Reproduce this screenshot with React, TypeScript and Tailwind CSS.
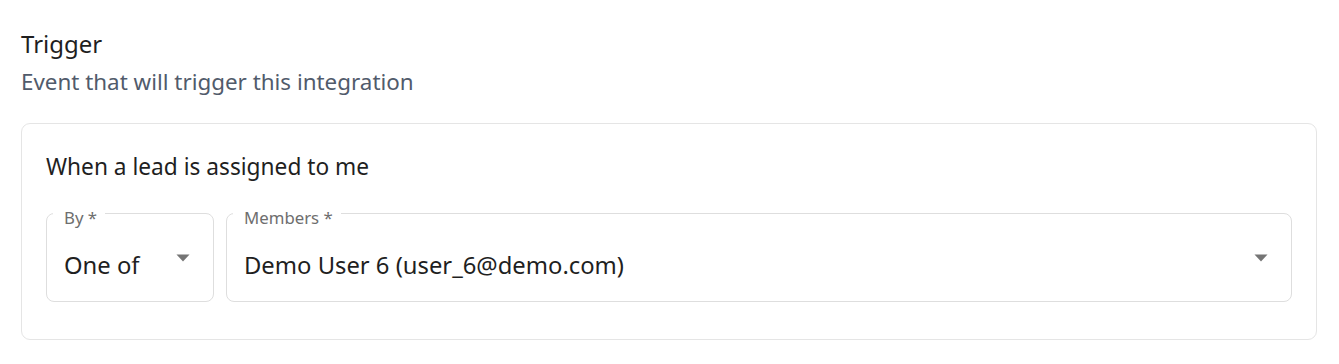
import React from "react";

function Caret() {
  return (
    <svg width="14" height="8" viewBox="0 0 14 8" className="shrink-0">
      <path d="M0.5 0.5h13L7 7.5z" fill="#757575" />
    </svg>
  );
}

function Field({ label, value, className }: { label: string; value: string; className: string }) {
  return (
    <fieldset className={`h-[102px] rounded-[8px] border border-[#dedede] px-[17px] pb-0 pt-0 ${className}`}>
      <legend className="ml-[-11px] pl-[11px] pr-[8px] pt-[10px] text-[16.8px] leading-[16px] text-[#6e6e6e]">{label}</legend>
      <div className="flex items-center justify-between pr-[6px] pt-[23px]">
        <span className="text-[23.8px] leading-[32px] text-[#1f1f1f]">{value}</span>
        <div className="mb-[14px]"><Caret /></div>
      </div>
    </fieldset>
  );
}

export default function App() {
  return (
    <div className="min-h-[364px] bg-white px-[21px] pt-[28px] font-['Noto_Sans',sans-serif]">
      <div className="text-[24px] leading-[32px] text-[#1f1f1f]">Trigger</div>
      <div className="mt-[7px] text-[22.4px] leading-[30px] text-[#515b6b]">Event that will trigger this integration</div>
      <div className="mt-[26px] w-[1296px] rounded-[9px] border border-[#e5e5e5] px-[24px] pb-[37px] pt-[28px]">
        <div className="text-[22.7px] leading-[30px] text-[#1f1f1f]">When a lead is assigned to me</div>
        <div className="mt-[18px] flex gap-[12px]">
          <Field label="By *" value="One of" className="w-[168px]" />
          <Field label="Members *" value="Demo User 6 (user_6@demo.com)" className="flex-1" />
        </div>
      </div>
    </div>
  );
}
